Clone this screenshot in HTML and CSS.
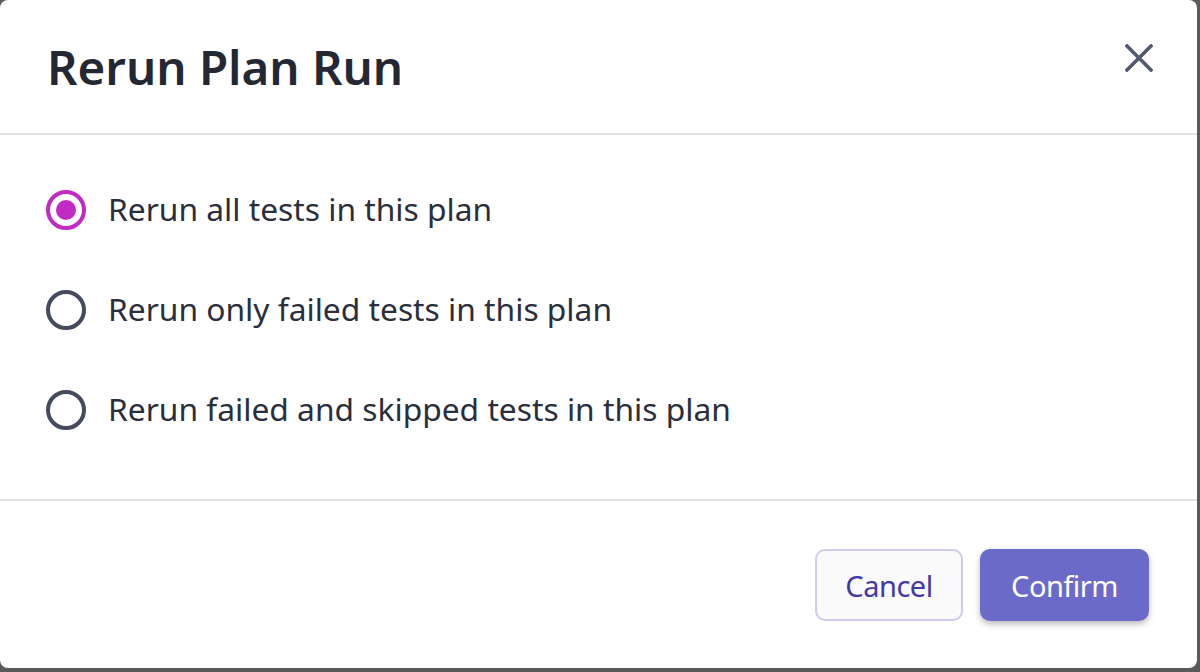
FILE: index.html
```html
<!DOCTYPE html>
<html lang="en">
<head>
<meta charset="utf-8">
<title>Rerun Plan Run</title>
<link rel="stylesheet" href="styles.css">
</head>
<body>
<div class="modal" role="dialog" aria-labelledby="modal-title">
  <header class="modal-header">
    <h1 id="modal-title" class="modal-title">Rerun Plan Run</h1>
    <button class="close-btn" aria-label="Close">
      <svg viewBox="0 0 28 28" width="28" height="28" aria-hidden="true">
        <path d="M2 2 L26 26 M26 2 L2 26" stroke="#525a6e" stroke-width="3.6" stroke-linecap="square" fill="none"/>
      </svg>
    </button>
  </header>
  <div class="modal-body">
    <label class="radio-row">
      <span class="radio checked"><span class="dot"></span></span>
      <span class="radio-label">Rerun all tests in this plan</span>
    </label>
    <label class="radio-row">
      <span class="radio"></span>
      <span class="radio-label">Rerun only failed tests in this plan</span>
    </label>
    <label class="radio-row">
      <span class="radio"></span>
      <span class="radio-label">Rerun failed and skipped tests in this plan</span>
    </label>
  </div>
  <footer class="modal-footer">
    <button class="btn btn-secondary">Cancel</button>
    <button class="btn btn-primary">Confirm</button>
  </footer>
</div>
</body>
</html>
```

FILE: styles.css
```css
html, body {
  margin: 0;
  padding: 0;
}
body {
  background: #5a5a5a;
  width: 1200px;
  height: 672px;
  overflow: hidden;
  font-family: "Noto Sans", "Open Sans", sans-serif;
}
.modal {
  width: 1197px;
  height: 668px;
  background: #ffffff;
  border-radius: 8px;
  display: flex;
  flex-direction: column;
  box-sizing: border-box;
}
.modal-header {
  height: 135px;
  flex: none;
  box-sizing: border-box;
  border-bottom: 2px solid #e2e2e2;
  display: flex;
  align-items: center;
  justify-content: space-between;
  padding: 0 44px 0 47px;
}
.modal-title {
  margin: 0;
  font-size: 47.5px;
  font-weight: 600;
  color: #232833;
  line-height: 1;
}
.close-btn {
  align-self: flex-start;
  margin-top: 44px;
  width: 28px;
  height: 28px;
  padding: 0;
  border: none;
  background: transparent;
  display: flex;
}
.modal-body {
  flex: none;
  padding: 55px 48px 0 46px;
  height: 366px;
  box-sizing: border-box;
  border-bottom: 2px solid #e2e2e2;
  display: flex;
  flex-direction: column;
  gap: 60px;
}
.radio-row {
  display: flex;
  align-items: center;
  gap: 22px;
  height: 40px;
}
.radio {
  width: 40px;
  height: 40px;
  box-sizing: border-box;
  border: 4px solid #454b5c;
  border-radius: 50%;
  display: flex;
  align-items: center;
  justify-content: center;
  flex: none;
}
.radio.checked {
  border-color: #c12ac3;
}
.dot {
  width: 20px;
  height: 20px;
  border-radius: 50%;
  background: #c12ac3;
}
.radio-label {
  font-size: 31.75px;
  color: #2a2f3b;
  line-height: 1;
  margin-top: -2px;
}
.modal-footer {
  flex: 1;
  display: flex;
  justify-content: flex-end;
  align-items: flex-start;
  gap: 17px;
  padding: 48px 48px 0 0;
}
.btn {
  height: 72px;
  font-family: "Noto Sans", "Open Sans", sans-serif;
  font-size: 29px;
  letter-spacing: -0.5px;
  border-radius: 10px;
  box-sizing: border-box;
  padding: 0;
  text-align: center;
  cursor: pointer;
}
.btn-secondary {
  width: 148px;
  background: #fafafa;
  border: 2px solid #cdcbf1;
  color: #4539a9;
}
.btn-primary {
  width: 169px;
  background: #6c6ac9;
  border: none;
  color: #ffffff;
  box-shadow: 0 3px 6px rgba(0, 0, 0, 0.28);
}
```
